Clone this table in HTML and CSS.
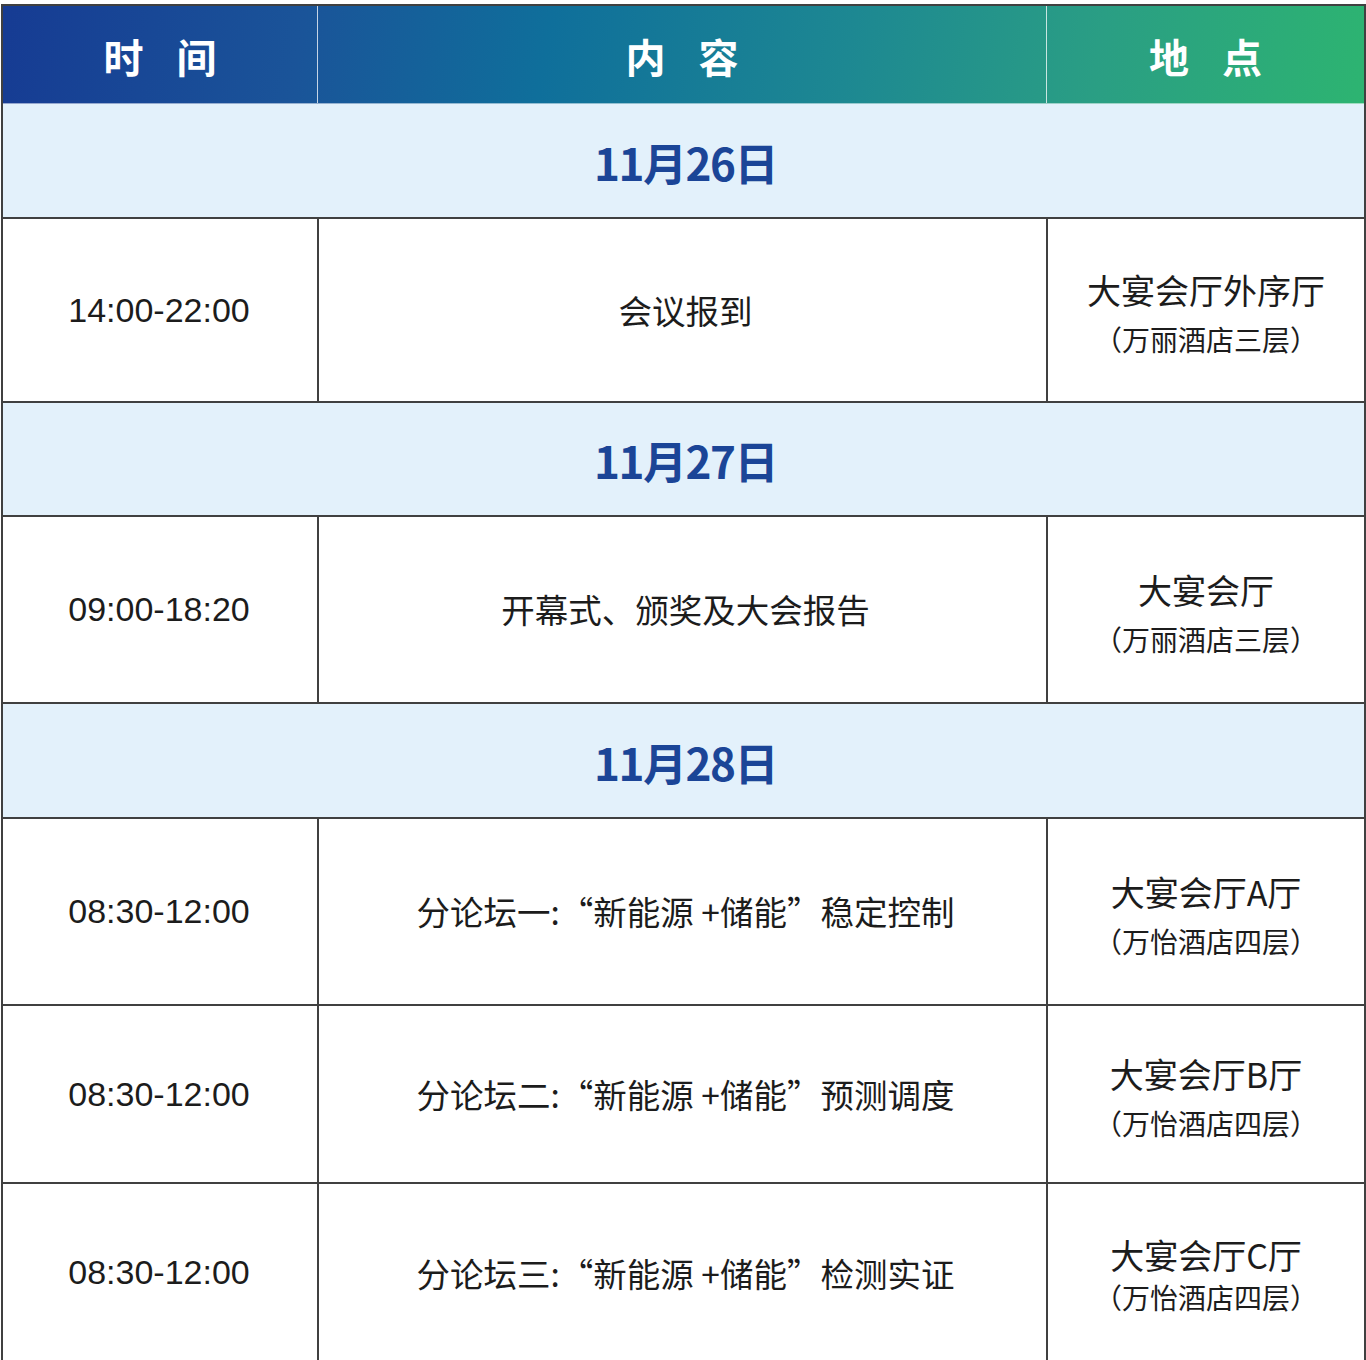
FILE: index.html
```html
<!DOCTYPE html>
<html lang="zh-CN">
<head>
<meta charset="utf-8">
<title>会议日程</title>
<link rel="stylesheet" href="styles.css">
</head>
<body>
<div class="page">
  <div class="schedule">
    <div class="head">
      <div class="th"><span>时</span><span>间</span></div>
      <div class="th"><span>内</span><span>容</span></div>
      <div class="th"><span>地</span><span>点</span></div>
    </div>

    <div class="date d1">11月26日</div>
    <div class="row r1">
      <div class="cell time">14:00-22:00</div>
      <div class="cell topic">会议报到</div>
      <div class="cell place"><div class="main">大宴会厅外序厅</div><div class="sub">（万丽酒店三层）</div></div>
    </div>

    <div class="date d2">11月27日</div>
    <div class="row r2">
      <div class="cell time">09:00-18:20</div>
      <div class="cell topic">开幕式、颁奖及大会报告</div>
      <div class="cell place"><div class="main">大宴会厅</div><div class="sub">（万丽酒店三层）</div></div>
    </div>

    <div class="date d3">11月28日</div>
    <div class="row r3">
      <div class="cell time">08:30-12:00</div>
      <div class="cell topic">分论坛一:“新能源 +储能”稳定控制</div>
      <div class="cell place"><div class="main">大宴会厅A厅</div><div class="sub">（万怡酒店四层）</div></div>
    </div>
    <div class="row r4">
      <div class="cell time">08:30-12:00</div>
      <div class="cell topic">分论坛二:“新能源 +储能”预测调度</div>
      <div class="cell place"><div class="main">大宴会厅B厅</div><div class="sub">（万怡酒店四层）</div></div>
    </div>
    <div class="row r5">
      <div class="cell time">08:30-12:00</div>
      <div class="cell topic">分论坛三:“新能源 +储能”检测实证</div>
      <div class="cell place tight"><div class="main">大宴会厅C厅</div><div class="sub">（万怡酒店四层）</div></div>
    </div>
  </div>
</div>
</body>
</html>
```

FILE: styles.css
```css
* { box-sizing: border-box; }
html, body { margin: 0; padding: 0; background: #ffffff; }
body {
  font-family: "Noto Sans CJK SC", "Noto Sans", sans-serif;
  color: #1c1c1c;
}
.page {
  padding: 4px 0 0 1px;
  height: 1360px;
  overflow: hidden;
}
.schedule {
  width: 1365px;
  border: 2px solid #404040;
  border-bottom: none;
}
.head {
  display: grid;
  grid-template-columns: 314px 729px 1fr;
  height: 98px;
  background: linear-gradient(100deg, #163b93 0%, #1a5499 22%, #0f6f9b 40%, #1d8892 62%, #2a9e84 80%, #2db471 100%);
  border-bottom: 1px solid rgba(255,255,255,0.55);
}
.th {
  display: flex;
  align-items: center;
  justify-content: center;
  gap: 33px;
  color: #ffffff;
  font-weight: 700;
  font-size: 40px;
  padding-top: 2px;
}
.th + .th { border-left: 1px solid rgba(255,255,255,0.75); }

.date {
  display: flex;
  align-items: center;
  justify-content: center;
  background: #e3f1fb;
  border-bottom: 2px solid #404040;
  color: #1b4597;
  font-weight: 700;
  font-size: 44px;
  letter-spacing: -1.5px;
  padding-top: 2px;
  padding-left: 4px;
}
.d1 { height: 115px; }
.d2 { height: 114px; }
.d3 { height: 115px; }

.row {
  display: grid;
  grid-template-columns: 314px 729px 1fr;
  border-bottom: 2px solid #404040;
}
.r1 { height: 184px; }
.r2 { height: 187px; }
.r3 { height: 187px; }
.r4 { height: 178px; }
.r5 { height: 200px; }

.cell {
  display: flex;
  flex-direction: column;
  align-items: center;
  justify-content: center;
  text-align: center;
}
.cell + .cell { border-left: 2px solid #404040; }
.r5 .cell { padding-bottom: 22px; }

.time {
  font-family: "Liberation Sans", Arial, sans-serif;
  font-size: 34px;
  padding-right: 2px;
}
.topic {
  font-size: 33.5px;
  padding-bottom: 2px;
  padding-left: 6px;
}
.place { padding-top: 14px; }
.r5 .place { padding-top: 0; padding-bottom: 16px; }
.place .main {
  font-size: 34px;
  line-height: 44px;
}
.place .sub {
  font-size: 28px;
  line-height: 54px;
  font-feature-settings: "halt";
}
.place.tight .sub { line-height: 40px; }
```
